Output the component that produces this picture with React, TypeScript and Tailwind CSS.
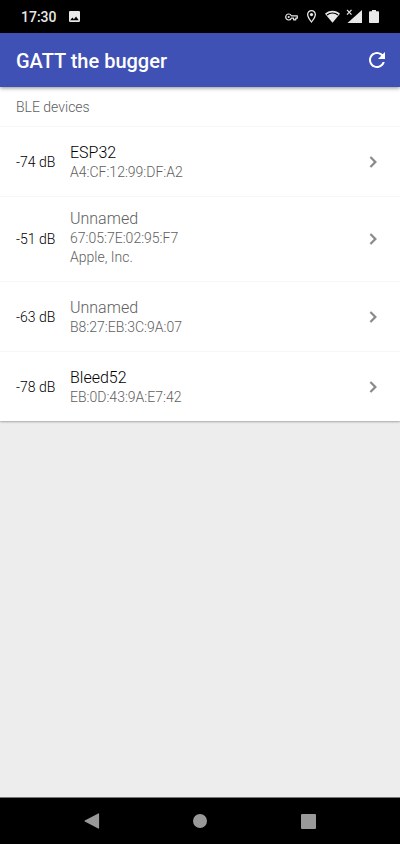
type Device = {
  rssi: number;
  name?: string;
  address: string;
  vendor?: string;
};

const devices: Device[] = [
  { rssi: -74, name: "ESP32", address: "A4:CF:12:99:DF:A2" },
  { rssi: -51, address: "67:05:7E:02:95:F7", vendor: "Apple, Inc." },
  { rssi: -63, address: "B8:27:EB:3C:9A:07" },
  { rssi: -78, name: "Bleed52", address: "EB:0D:43:9A:E7:42" },
];

function StatusBar() {
  return (
    <div className="flex h-[33px] shrink-0 items-center justify-between bg-black px-[21px] text-[#e8e8e8]">
      <div className="flex items-center gap-3">
        <time className="text-sm font-medium">17:30</time>
        <svg className="size-[11px]" viewBox="3 3 18 18" fill="currentColor" aria-hidden="true">
          <path d="M21 19V5c0-1.1-.9-2-2-2H5c-1.1 0-2 .9-2 2v14c0 1.1.9 2 2 2h14c1.1 0 2-.9 2-2zM8.500 13.500l2.500 3.010L14.500 12l4.500 6H5l3.500-4.500z" />
        </svg>
      </div>
      <div className="flex items-center" aria-hidden="true">
        <svg className="mr-[9px] h-2 w-[13px]" viewBox="0 0 13 8" fill="none">
          <path
            d="M6.300 2.800C5.800 1.600 4.900 1 3.700 1 2 1 .7 2.300.7 4s1.300 3 3 3c1.200 0 2.100-.6 2.600-1.800H8.600V6.800h2.200V5.200h1.500V2.800z"
            stroke="currentColor"
            strokeWidth="1.200"
            strokeLinejoin="round"
          />
          <circle cx="3.700" cy="4" r="1.100" fill="currentColor" />
        </svg>
        <svg className="mr-[9px] h-[13px] w-[9px]" viewBox="5 2 14 20" fill="currentColor">
          <path d="M12 2C8.130 2 5 5.130 5 9c0 5.250 7 13 7 13s7-7.750 7-13c0-3.870-3.130-7-7-7zM7 9c0-2.760 2.240-5 5-5s5 2.240 5 5c0 2.880-2.880 7.190-5 9.880C9.920 16.210 7 11.850 7 9z" />
          <circle cx="12" cy="9" r="2.500" />
        </svg>
        <svg className="mr-[6px] h-[13px] w-[15px]" viewBox="0 0 15 13" fill="none">
          <path d="M0 3.800C2 1.800 4.500.7 7.500.7S13 1.800 15 3.800L7.500 12.800z" fill="currentColor" />
          <path d="M2 5C3.500 3.700 5.400 3 7.500 3s4 .7 5.500 2" stroke="black" strokeWidth="1.100" />
        </svg>
        <svg className="mr-[7px] h-[15px] w-4" viewBox="0 0 16 15" fill="none">
          <path d="M16 1v13H1.500z" fill="currentColor" />
          <path d="M0 0h7v6H0z" fill="black" />
          <path d="M1 .8l4.500 4.800M5.500.8L1 5.600" stroke="currentColor" strokeWidth="1.200" />
        </svg>
        <svg className="h-[13px] w-[10px]" viewBox="0 0 10 13" fill="currentColor">
          <path d="M3 0h4v1.300h2c.6 0 1 .4 1 .9V12c0 .6-.4 1-1 1H1c-.6 0-1-.4-1-1V2.200c0-.5.4-.9 1-.9h2z" />
        </svg>
      </div>
    </div>
  );
}

function AppBar() {
  return (
    <header className="relative flex h-[54px] shrink-0 items-center justify-between bg-[#3f51b5] pl-4 pr-[11px] text-white shadow-[0_1px_4px_rgba(0,0,0,0.45)]">
      <h1 className="pt-0.5 text-xl font-medium">GATT the bugger</h1>
      <button type="button" aria-label="Refresh">
        <svg className="size-6" viewBox="0 0 24 24" fill="currentColor" aria-hidden="true">
          <path d="M17.650 6.350C16.200 4.900 14.210 4 12 4c-4.420 0-7.990 3.580-7.990 8s3.570 8 7.990 8c3.730 0 6.840-2.550 7.730-6h-2.080c-.82 2.330-3.040 4-5.650 4-3.310 0-6-2.690-6-6s2.690-6 6-6c1.660 0 3.140.69 4.220 1.780L13 11h7V4l-2.350 2.350z" />
        </svg>
      </button>
    </header>
  );
}

function DeviceRow({ device }: { device: Device }) {
  return (
    <li className="border-t border-[#f7f7f7]">
      <button type="button" className="flex min-h-[69px] w-full items-center px-4 py-[10px] text-left">
        <span className="w-[54px] shrink-0 text-sm font-light text-black">{device.rssi} dB</span>
        <span className="flex grow flex-col pt-0.5 font-light">
          <span className={device.name ? "text-base leading-[20px] text-black" : "text-base leading-[20px] text-[#606060]"}>
            {device.name ?? "Unnamed"}
          </span>
          <span className="text-sm leading-[19px] text-[#606060]">{device.address}</span>
          {device.vendor && <span className="pb-1 text-sm leading-[19px] text-[#606060]">{device.vendor}</span>}
        </span>
        <svg className="size-[22px] shrink-0 text-[#888888]" viewBox="0 0 24 24" fill="currentColor" aria-hidden="true">
          <path d="M8.590 16.590L13.170 12 8.590 7.410 10 6l6 6-6 6-1.410-1.410z" stroke="currentColor" strokeWidth="0.500" />
        </svg>
      </button>
    </li>
  );
}

function NavigationBar() {
  return (
    <nav className="flex h-[47px] shrink-0 items-stretch justify-center border-t border-[#777777] bg-black text-[#999999]">
      <button type="button" aria-label="Back" className="flex w-[108px] items-center justify-center">
        <svg className="size-4" viewBox="0 0 16 16" fill="currentColor" aria-hidden="true">
          <path d="M14.200.4c.5-.3.900 0 .9.500v14.200c0 .5-.4.800-.9.500L.8 8.500c-.4-.2-.4-.8 0-1z" />
        </svg>
      </button>
      <button type="button" aria-label="Home" className="flex w-[108px] items-center justify-center">
        <span className="size-[14px] rounded-full bg-[#999999]" />
      </button>
      <button type="button" aria-label="Recent apps" className="flex w-[108px] items-center justify-center">
        <span className="size-[15px] rounded-[1px] bg-[#999999]" />
      </button>
    </nav>
  );
}

export default function App() {
  return (
    <div className="flex min-h-screen flex-col bg-[#ededed] font-['Roboto',sans-serif]">
      <StatusBar />
      <AppBar />
      <main className="grow">
        <section className="bg-white shadow-[0_1px_2px_rgba(0,0,0,0.3)]">
          <h2 className="px-4 pb-[9px] pt-[11px] text-sm font-light leading-[19px] text-[#606060]">BLE devices</h2>
          <ul>
            {devices.map((device) => (
              <DeviceRow key={device.address} device={device} />
            ))}
          </ul>
        </section>
      </main>
      <NavigationBar />
    </div>
  );
}
